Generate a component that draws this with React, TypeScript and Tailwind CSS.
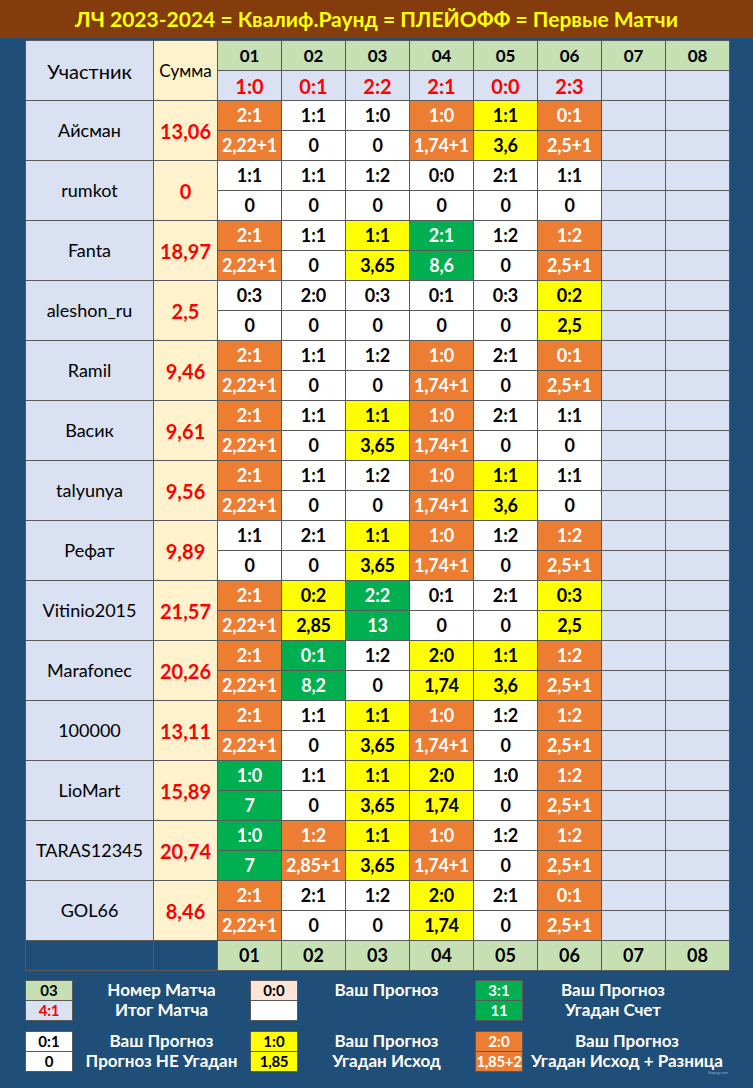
import React from 'react';

type Tone = 'w' | 'o' | 'y' | 'g';
type Pick = [string, string, Tone];

interface Player {
  name: string;
  sum: string;
  picks: Pick[];
}

const results = ['1:0', '0:1', '2:2', '2:1', '0:0', '2:3'];
const matches = ['01', '02', '03', '04', '05', '06', '07', '08'];

const O1: Pick = ['2:1', '2,22+1', 'o'];

const players: Player[] = [
  { name: 'Айсман', sum: '13,06', picks: [O1, ['1:1', '0', 'w'], ['1:0', '0', 'w'], ['1:0', '1,74+1', 'o'], ['1:1', '3,6', 'y'], ['0:1', '2,5+1', 'o']] },
  { name: 'rumkot', sum: '0', picks: [['1:1', '0', 'w'], ['1:1', '0', 'w'], ['1:2', '0', 'w'], ['0:0', '0', 'w'], ['2:1', '0', 'w'], ['1:1', '0', 'w']] },
  { name: 'Fanta', sum: '18,97', picks: [O1, ['1:1', '0', 'w'], ['1:1', '3,65', 'y'], ['2:1', '8,6', 'g'], ['1:2', '0', 'w'], ['1:2', '2,5+1', 'o']] },
  { name: 'aleshon_ru', sum: '2,5', picks: [['0:3', '0', 'w'], ['2:0', '0', 'w'], ['0:3', '0', 'w'], ['0:1', '0', 'w'], ['0:3', '0', 'w'], ['0:2', '2,5', 'y']] },
  { name: 'Ramil', sum: '9,46', picks: [O1, ['1:1', '0', 'w'], ['1:2', '0', 'w'], ['1:0', '1,74+1', 'o'], ['2:1', '0', 'w'], ['0:1', '2,5+1', 'o']] },
  { name: 'Васик', sum: '9,61', picks: [O1, ['1:1', '0', 'w'], ['1:1', '3,65', 'y'], ['1:0', '1,74+1', 'o'], ['2:1', '0', 'w'], ['1:1', '0', 'w']] },
  { name: 'talyunya', sum: '9,56', picks: [O1, ['1:1', '0', 'w'], ['1:2', '0', 'w'], ['1:0', '1,74+1', 'o'], ['1:1', '3,6', 'y'], ['1:1', '0', 'w']] },
  { name: 'Рефат', sum: '9,89', picks: [['1:1', '0', 'w'], ['2:1', '0', 'w'], ['1:1', '3,65', 'y'], ['1:0', '1,74+1', 'o'], ['1:2', '0', 'w'], ['1:2', '2,5+1', 'o']] },
  { name: 'Vitinio2015', sum: '21,57', picks: [O1, ['0:2', '2,85', 'y'], ['2:2', '13', 'g'], ['0:1', '0', 'w'], ['2:1', '0', 'w'], ['0:3', '2,5', 'y']] },
  { name: 'Marafonec', sum: '20,26', picks: [O1, ['0:1', '8,2', 'g'], ['1:2', '0', 'w'], ['2:0', '1,74', 'y'], ['1:1', '3,6', 'y'], ['1:2', '2,5+1', 'o']] },
  { name: '100000', sum: '13,11', picks: [O1, ['1:1', '0', 'w'], ['1:1', '3,65', 'y'], ['1:0', '1,74+1', 'o'], ['1:2', '0', 'w'], ['1:2', '2,5+1', 'o']] },
  { name: 'LioMart', sum: '15,89', picks: [['1:0', '7', 'g'], ['1:1', '0', 'w'], ['1:1', '3,65', 'y'], ['2:0', '1,74', 'y'], ['1:0', '0', 'w'], ['1:2', '2,5+1', 'o']] },
  { name: 'TARAS12345', sum: '20,74', picks: [['1:0', '7', 'g'], ['1:2', '2,85+1', 'o'], ['1:1', '3,65', 'y'], ['1:0', '1,74+1', 'o'], ['1:2', '0', 'w'], ['1:2', '2,5+1', 'o']] },
  { name: 'GOL66', sum: '8,46', picks: [O1, ['2:1', '0', 'w'], ['1:2', '0', 'w'], ['2:0', '1,74', 'y'], ['2:1', '0', 'w'], ['0:1', '2,5+1', 'o']] },
];

const toneClass: Record<Tone, string> = {
  w: 'bg-white text-black',
  o: 'bg-[#ed7d31] text-white',
  y: 'bg-[#ffff00] text-black',
  g: 'bg-[#00b050] text-white',
};

const cell = 'flex items-center justify-center border-r border-b border-[#595959] h-[30px] whitespace-nowrap';

function LegendBox({ top, bottom }: { top: [string, string]; bottom: [string, string] }) {
  return (
    <div className="flex flex-col border border-[#595959] w-[48px]">
      <div className={`h-[19px] flex items-center justify-center text-[15px] font-bold ${top[1]}`}>{top[0]}</div>
      <div className={`h-[20px] flex items-center justify-center text-[15px] font-bold border-t border-[#595959] whitespace-nowrap tracking-[-0.3px] ${bottom[1]}`}>{bottom[0]}</div>
    </div>
  );
}

function LegendText({ lines, className = '' }: { lines: string[]; className?: string }) {
  return (
    <div className={`flex flex-col text-white font-bold text-[17px] leading-[20px] ${className}`}>
      {lines.map((l, i) => (
        <div key={i} className="h-[20px] text-center whitespace-nowrap">{l}</div>
      ))}
    </div>
  );
}

export default function App() {
  return (
    <div className="w-[753px] h-[1088px] bg-[#1f4e79] relative overflow-hidden" style={{ fontFamily: 'Lato, "Noto Sans", sans-serif' }}>
      <div className="h-[38px] bg-[#843c0c] flex items-center justify-center text-[#ffff00] font-bold text-[21px]">
        ЛЧ 2023-2024 = Квалиф.Раунд = ПЛЕЙОФФ = Первые Матчи
      </div>

      <div className="mt-[2px] ml-[25px] w-[704px] grid grid-cols-[128px_64px_repeat(8,64px)] border-l border-t border-[#595959]">
        {/* header */}
        <div className={`${cell} row-span-2 h-[60px] bg-[#d9e1f2] text-[20px] text-black`}>Участник</div>
        <div className={`${cell} row-span-2 h-[60px] bg-[#fff2cc] text-[17px] text-black`}>Сумма</div>
        {matches.map((m) => (
          <div key={m} className={`${cell} bg-[#c6e0b4] text-[17px] font-bold text-black`}>{m}</div>
        ))}
        {matches.map((m, i) => (
          <div key={'r' + m} className={`${cell} bg-[#d9e1f2] text-[20px] font-bold text-[#ff0000]`}>{results[i] ?? ''}</div>
        ))}

        {players.map((p) => (
          <React.Fragment key={p.name}>
            <div className={`${cell} row-span-2 h-[60px] bg-[#d9e1f2] text-[18px] text-black`}>{p.name}</div>
            <div className={`${cell} row-span-2 h-[60px] bg-[#fff2cc] text-[20px] font-bold text-[#ff0000]`}>{p.sum}</div>
            {p.picks.map((k, i) => (
              <div key={'a' + i} className={`${cell} ${toneClass[k[2]]} text-[18px] font-bold`}>{k[0]}</div>
            ))}
            <div className={`${cell} bg-[#d9e1f2]`} />
            <div className={`${cell} bg-[#d9e1f2]`} />
            {p.picks.map((k, i) => (
              <div key={'b' + i} className={`${cell} ${toneClass[k[2]]} text-[18px] font-bold tracking-[-0.2px]`}>{k[1]}</div>
            ))}
            <div className={`${cell} bg-[#d9e1f2]`} />
            <div className={`${cell} bg-[#d9e1f2]`} />
          </React.Fragment>
        ))}

        {/* footer */}
        <div className={cell} />
        <div className={cell} />
        {matches.map((m) => (
          <div key={'f' + m} className={`${cell} bg-[#c6e0b4] text-[18px] font-bold text-black`}>{m}</div>
        ))}
      </div>

      {/* legend */}
      <div className="ml-[25px] mt-[9px] flex flex-col gap-[10px]">
        <div className="flex items-start">
          <LegendBox top={['03', 'bg-[#c6e0b4] text-black']} bottom={['4:1', 'bg-[#d9e1f2] text-[#ff0000]']} />
          <LegendText className="w-[177px]" lines={['Номер Матча', 'Итог Матча']} />
          <LegendBox top={['0:0', 'bg-[#fce4d6] text-black']} bottom={['', 'bg-white']} />
          <LegendText className="w-[177px]" lines={['Ваш Прогноз', '']} />
          <LegendBox top={['3:1', 'bg-[#00b050] text-white']} bottom={['11', 'bg-[#00b050] text-white']} />
          <LegendText className="w-[180px]" lines={['Ваш Прогноз', 'Угадан Счет']} />
        </div>
        <div className="flex items-start">
          <LegendBox top={['0:1', 'bg-white text-black']} bottom={['0', 'bg-white text-black']} />
          <LegendText className="w-[177px]" lines={['Ваш Прогноз', 'Прогноз НЕ Угадан']} />
          <LegendBox top={['1:0', 'bg-[#ffff00] text-black']} bottom={['1,85', 'bg-[#ffff00] text-black']} />
          <LegendText className="w-[177px]" lines={['Ваш Прогноз', 'Угадан Исход']} />
          <LegendBox top={['2:0', 'bg-[#ed7d31] text-white']} bottom={['1,85+2', 'bg-[#ed7d31] text-white']} />
          <LegendText className="w-[208px]" lines={['Ваш Прогноз', 'Угадан Исход + Разница']} />
        </div>
      </div>

      <div className="absolute left-[708px] top-[1070px] text-[4px] text-[#8fa9c4]">ibapng.com</div>
    </div>
  );
}
